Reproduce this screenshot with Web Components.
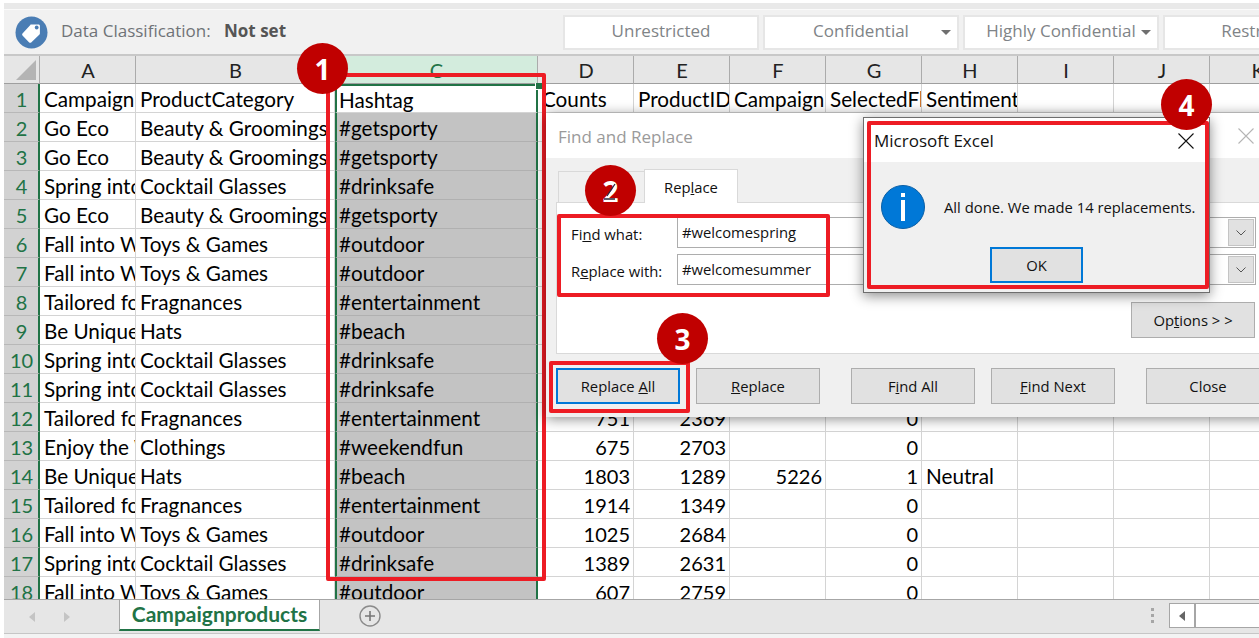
<!DOCTYPE html>
<html lang="en">
<head>
<meta charset="utf-8">
<title>Find and Replace</title>
<style>
  html, body { margin: 0; padding: 0; background: #fff; }
  body { font-family: "Open Sans", "Liberation Sans", sans-serif; }
</style>
</head>
<body>
<excel-app>
  <info-bar slot="top"></info-bar>
  <sheet-grid slot="sheet"></sheet-grid>
  <sheet-tabs slot="bottom"></sheet-tabs>

  <red-box slot="over" style="left:326px;top:73px;width:220px;height:508px"></red-box>
  <find-dialog slot="over" style="left:546px;top:113px"></find-dialog>
  <red-box slot="over" style="left:557px;top:214px;width:273px;height:83px"></red-box>
  <red-box slot="over" style="left:549px;top:361px;width:141px;height:52px"></red-box>
  <message-box slot="over" style="left:863px;top:117px"></message-box>
  <red-box slot="over" style="left:867px;top:121px;width:342px;height:168px"></red-box>
  <call-out slot="over" style="left:297px;top:43px">1</call-out>
  <call-out slot="over" style="left:585px;top:165px" show-through>2</call-out>
  <call-out slot="over" style="left:657px;top:313px">3</call-out>
  <call-out slot="over" style="left:1161px;top:79px">4</call-out>
</excel-app>

<script>
/**
 * Page shell: top strip, classification bar, sheet and tab bar stacked in a column.
 * Overlays (dialogs, call-outs, red boxes) go in the "over" slot.
 */
class ExcelApp extends HTMLElement {
  constructor() {
    super();
    this.attachShadow({ mode: 'open' });
  }

  connectedCallback() {
    this.shadowRoot.innerHTML = `
      <style>
        :host {
          display: block;
          position: relative;
          width: 1259px;
          height: 638px;
          overflow: hidden;
          background: #fff;
        }
        .col {
          display: flex;
          flex-direction: column;
          height: 100%;
          padding: 3px 0 0 4px;
          box-sizing: border-box;
        }
        .strip {
          height: 6px;
          flex: none;
          background: #e9e9e9;
          border-bottom: 1px solid #fafafa;
        }
        .sheet {
          flex: 1;
          min-height: 0;
          overflow: hidden;
        }
      </style>
      <div class="col">
        <div class="strip"></div>
        <slot name="top"></slot>
        <div class="sheet"><slot name="sheet"></slot></div>
        <slot name="bottom"></slot>
      </div>
      <slot name="over"></slot>
    `;
  }
}

class ClassButton extends HTMLElement {
  constructor() {
    super();
    this.attachShadow({ mode: 'open' });
  }

  connectedCallback() {
    const arrow = this.hasAttribute('arrow');
    this.shadowRoot.innerHTML = `
      <style>
        :host {
          display: block;
          flex: none;
          width: 196px;
          height: 35px;
        }
        .btn {
          display: flex;
          align-items: center;
          justify-content: center;
          position: relative;
          height: 100%;
          box-sizing: border-box;
          padding-bottom: 3px;
          background: #fff;
          border: 2px solid #e6e6e6;
          color: #7f8487;
          font: 17px "Open Sans", sans-serif;
          white-space: nowrap;
        }
        .caret {
          position: absolute;
          right: 6px;
          top: 13px;
          width: 0;
          height: 0;
          border-left: 5px solid transparent;
          border-right: 5px solid transparent;
          border-top: 5px solid #6f6f6f;
        }
      </style>
      <div class="btn"><slot></slot>${arrow ? '<span class="caret"></span>' : ''}</div>
    `;
  }
}

class InfoBar extends HTMLElement {
  constructor() {
    super();
    this.attachShadow({ mode: 'open' });
  }

  connectedCallback() {
    this.shadowRoot.innerHTML = `
      <style>
        :host {
          display: flex;
          align-items: center;
          flex: none;
          height: 44px;
          background: #f1f1f1;
          border-bottom: 2px solid #c8c8c8;
          font: 17px "Open Sans", sans-serif;
          color: #6f7377;
          white-space: nowrap;
        }
        .tag { flex: none; width: 33px; height: 33px; margin: 0 13px 0 11px; }
        .label { width: 163px; flex: none; margin-top: -3px; }
        b { width: 339px; flex: none; margin-top: -3px; color: #555; font-weight: 700; }
        .btns { display: flex; gap: 4px; }
      </style>
      <svg class="tag" viewBox="0 0 33 33">
        <circle cx="16.5" cy="16.5" r="16" fill="#4a7db4"/>
        <path d="M15 8.500h8.500c.8 0 1.400.6 1.400 1.400V17.500c0 .4-.2.7-.4.9l-8.300 8c-.6.5-1.400.5-2 0l-6.700-6.800c-.5-.6-.5-1.400 0-2l7.400-8.200c.3-.3.6-.4 1-.4z" fill="#fff"/>
        <circle cx="21.700" cy="11.500" r="1.900" fill="#4a7db4"/>
      </svg>
      <span class="label">Data Classification:</span>
      <b>Not set</b>
      <div class="btns">
        <class-button>Unrestricted</class-button>
        <class-button arrow>Confidential</class-button>
        <class-button arrow>Highly Confidential</class-button>
        <class-button>Restricted</class-button>
      </div>
    `;
  }
}

const COLUMNS = ['A', 'B', 'C', 'D', 'E', 'F', 'G', 'H', 'I', 'J', 'K'];

// [Campaign, ProductCategory, Hashtag, D, E, F, G, H]; the dialogs cover D-H on rows 2-11
const ROWS = [
  ['CampaignName', 'ProductCategory', 'Hashtag', 'Counts', 'ProductID', 'CampaignID', 'SelectedFlag', 'Sentiment'],
  ['Go Eco', 'Beauty & Groomings', '#getsporty'],
  ['Go Eco', 'Beauty & Groomings', '#getsporty'],
  ['Spring into Summer', 'Cocktail Glasses', '#drinksafe'],
  ['Go Eco', 'Beauty & Groomings', '#getsporty'],
  ['Fall into Winter', 'Toys & Games', '#outdoor'],
  ['Fall into Winter', 'Toys & Games', '#outdoor'],
  ['Tailored for You', 'Fragnances', '#entertainment'],
  ['Be Unique', 'Hats', '#beach'],
  ['Spring into Summer', 'Cocktail Glasses', '#drinksafe'],
  ['Spring into Summer', 'Cocktail Glasses', '#drinksafe'],
  ['Tailored for You', 'Fragnances', '#entertainment', 751, 2369, '', 0],
  ['Enjoy the Weekend', 'Clothings', '#weekendfun', 675, 2703, '', 0],
  ['Be Unique', 'Hats', '#beach', 1803, 1289, 5226, 1, 'Neutral'],
  ['Tailored for You', 'Fragnances', '#entertainment', 1914, 1349, '', 0],
  ['Fall into Winter', 'Toys & Games', '#outdoor', 1025, 2684, '', 0],
  ['Spring into Summer', 'Cocktail Glasses', '#drinksafe', 1389, 2631, '', 0],
  ['Fall into Winter', 'Toys & Games', '#outdoor', 607, 2759, '', 0]
];

class SheetGrid extends HTMLElement {
  constructor() {
    super();
    this.attachShadow({ mode: 'open' });
  }

  connectedCallback() {
    const head = COLUMNS.map(c => `<div class="ch${c === 'C' ? ' on' : ''}">${c}</div>`).join('');
    const body = ROWS.map((row, r) => {
      const cells = COLUMNS.map((c, i) => {
        const v = row[i] === undefined ? '' : row[i];
        const num = typeof v === 'number' ? ' num' : '';
        let sel = '';
        if (c === 'C') sel = r === 0 ? ' first' : ' sel';
        const esc = String(v).replace(/&/g, '&amp;');
        return `<div class="c${num}${sel}">${esc}</div>`;
      }).join('');
      return `<div class="rh">${r + 1}</div>${cells}`;
    }).join('');

    this.shadowRoot.innerHTML = `
      <style>
        :host {
          display: block;
          font: 20.700px Lato, "Open Sans", sans-serif;
          color: #000;
        }
        .grid {
          display: grid;
          position: relative;
          grid-template-columns: 36px 96px 199px 203px repeat(8, 96px);
          grid-auto-rows: 29px;
          grid-template-rows: 28px;
        }
        .corner, .ch {
          background: #e6e6e6;
          border-right: 1px solid #ababab;
          border-bottom: 1px solid #9f9f9f;
          box-sizing: border-box;
        }
        .corner { position: relative; }
        .corner::after {
          content: "";
          position: absolute;
          right: 3px;
          bottom: 3px;
          border-left: 20px solid transparent;
          border-bottom: 20px solid #b4b4b4;
        }
        .ch {
          display: flex;
          align-items: center;
          justify-content: center;
          padding: 1px 0 0 1px;
          font-size: 20px;
          color: #222;
        }
        .ch.on { background: #d3ecdd; color: #217346; }
        .rh {
          display: flex;
          align-items: center;
          justify-content: center;
          padding: 1px 0 0 1px;
          background: #d2d2d2;
          border-right: 2px solid #217346;
          border-bottom: 1px solid #b8b8b8;
          box-sizing: border-box;
          font-size: 20px;
          color: #217346;
        }
        .c {
          border-right: 1px solid #d4d4d4;
          border-bottom: 1px solid #d4d4d4;
          box-sizing: border-box;
          padding: 1px 3px 0 4px;
          line-height: 28px;
          overflow: hidden;
          white-space: nowrap;
        }
        .num { text-align: right; font-size: 20px; }
        .sel, .first {
          border-left: 2px solid #217346;
          border-right: 2px solid #217346;
          padding-left: 2px;
        }
        .sel { background: #c3c3c3; border-bottom-color: #b0b0b0; background-clip: padding-box; }
        .first { background: #fff; border-top: 2px solid #217346; line-height: 26px; }
        .handle {
          position: absolute;
          left: 531px;
          top: 27px;
          width: 6px;
          height: 6px;
          background: #217346;
          border: 1px solid #fff;
          border-width: 0 0 1px 1px;
        }
      </style>
      <div class="grid">
        <div class="corner"></div>${head}
        ${body}
        <div class="handle"></div>
      </div>
    `;
  }
}

class SheetTabs extends HTMLElement {
  constructor() {
    super();
    this.attachShadow({ mode: 'open' });
  }

  connectedCallback() {
    this.shadowRoot.innerHTML = `
      <style>
        :host {
          display: block;
          flex: none;
          height: 39px;
          background: #f3f3f3;
        }
        .bar {
          display: flex;
          height: 35px;
          box-sizing: border-box;
          background: #e6e6e6;
          border-top: 1px solid #a6a6a6;
          border-bottom: 1px solid #c6c6c6;
        }
        .nav { display: flex; align-items: center; gap: 29px; width: 115px; padding-left: 25px; box-sizing: border-box; flex: none; }
        .nav i { width: 0; height: 0; border-top: 5px solid transparent; border-bottom: 5px solid transparent; }
        .nav .l { border-right: 6px solid #c4c4c4; }
        .nav .r { border-left: 6px solid #c4c4c4; }
        .tab {
          flex: none;
          width: 201px;
          height: 31px;
          box-sizing: border-box;
          background: #fff;
          border: 1px solid #a6a6a6;
          border-top: 0;
          border-bottom: 2px solid #217346;
          color: #217346;
          font: 700 21px Lato, sans-serif;
          text-align: center;
          line-height: 28px;
        }
        .add { flex: none; margin: 5px 0 0 39px; width: 22px; height: 22px; }
        .space { flex: 1; }
        .dots { flex: none; display: flex; flex-direction: column; gap: 3px; margin: 8px 15px 0 0; }
        .dots i { width: 3px; height: 3px; background: #a6a6a6; }
        .scroll {
          flex: none;
          display: flex;
          width: 100px;
          height: 25px;
          margin: 3px -10px 0 0;
          box-sizing: border-box;
          border: 1px solid #a6a6a6;
          background: #fff;
        }
        .scroll .btn {
          display: flex;
          align-items: center;
          justify-content: center;
          width: 24px;
          border-right: 2px solid #a6a6a6;
        }
        .scroll .btn i { border-top: 5px solid transparent; border-bottom: 5px solid transparent; border-right: 6px solid #666; }
      </style>
      <div class="bar">
        <div class="nav"><i class="l"></i><i class="r"></i></div>
        <div class="tab">Campaignproducts</div>
        <svg class="add" viewBox="0 0 22 22">
          <circle cx="11" cy="11" r="10" fill="none" stroke="#8a8a8a" stroke-width="1.400"/>
          <path d="M11 6v10M6 11h10" stroke="#777" stroke-width="1.600"/>
        </svg>
        <div class="space"></div>
        <div class="dots"><i></i><i></i><i></i></div>
        <div class="scroll"><div class="btn"><i></i></div></div>
      </div>
    `;
  }
}

class DlgButton extends HTMLElement {
  constructor() {
    super();
    this.attachShadow({ mode: 'open' });
  }

  connectedCallback() {
    this.shadowRoot.innerHTML = `
      <style>
        :host {
          display: flex;
          align-items: center;
          justify-content: center;
          flex: none;
          width: 124px;
          height: 36px;
          box-sizing: border-box;
          background: #e1e1e1;
          border: 1px solid #adadad;
          color: #111;
          font: 14.800px "Open Sans", sans-serif;
          white-space: nowrap;
        }
        :host([primary]) { border: 2px solid #0078d7; }
      </style>
      <span><slot></slot></span>
    `;
  }
}

class FindDialog extends HTMLElement {
  constructor() {
    super();
    this.attachShadow({ mode: 'open' });
  }

  connectedCallback() {
    this.shadowRoot.innerHTML = `
      <style>
        :host {
          display: block;
          position: absolute;
          width: 734px;
          height: 304px;
          background: #f0f0f0;
          box-shadow: 0 2px 12px rgba(0, 0, 0, .45);
          font: 14.800px "Open Sans", sans-serif;
          color: #111;
        }
        .title {
          display: flex;
          align-items: center;
          justify-content: space-between;
          height: 45px;
          box-sizing: border-box;
          padding: 1px 26px 0 12px;
          background: #fff;
          color: #9a9a9a;
          font-size: 17px;
        }
        .body { padding: 11px 10px 0; }
        .tabs { display: flex; height: 34px; padding-left: 2px; }
        .tab {
          display: flex;
          align-items: center;
          justify-content: center;
          padding-top: 1px;
          box-sizing: border-box;
          border: 1px solid #d9d9d9;
          border-bottom: 0;
        }
        .tab.find { width: 86px; margin-top: 2px; border-right: 0; }
        .tab.cur { width: 94px; background: #fff; }
        .panel {
          display: flex;
          flex-direction: column;
          height: 152px;
          box-sizing: border-box;
          padding: 14px 14px 0 14px;
          background: #fff;
          border: 1px solid #d9d9d9;
          margin-top: -1px;
        }
        .row { display: flex; align-items: center; height: 31px; }
        .row + .row { margin-top: 6px; }
        .row label { width: 106px; flex: none; padding-top: 3px; }
        .input {
          display: flex;
          align-items: center;
          justify-content: space-between;
          flex: none;
          width: 579px;
          height: 31px;
          box-sizing: border-box;
          padding: 0 1px 0 4px;
          border: 1px solid #adadad;
          background: #fff;
          line-height: 24px;
        }
        .input span { margin-top: -2px; }
        .drop {
          display: flex;
          align-items: center;
          justify-content: center;
          width: 26px;
          height: 27px;
          background: #e1e1e1;
          border: 1px solid #c4c4c4;
          box-sizing: border-box;
        }
        .opts { display: flex; justify-content: flex-end; margin: 17px 0 0; }
        .foot { display: flex; margin-top: 14px; }
        .foot dlg-button + dlg-button { margin-left: 16px; }
        .foot .gap { margin-left: 31px !important; }
      </style>
      <div class="title">
        <span>Find and Replace</span>
        <svg width="16" height="16" viewBox="0 0 16 16"><path d="M0.500 0.500l15 15M15.500 0.500l-15 15" stroke="#b5b5b5" stroke-width="1.100"/></svg>
      </div>
      <div class="body">
        <div class="tabs">
          <div class="tab find"><span>Fin<u>d</u></span></div>
          <div class="tab cur"><span>Rep<u>l</u>ace</span></div>
        </div>
        <div class="panel">
          <div class="row">
            <label>Fi<u>n</u>d what:</label>
            <div class="input"><span>#welcomespring</span>${this.chevron()}</div>
          </div>
          <div class="row">
            <label>R<u>e</u>place with:</label>
            <div class="input"><span>#welcomesummer</span>${this.chevron()}</div>
          </div>
          <div class="opts"><dlg-button>Op<u>t</u>ions &gt; &gt;</dlg-button></div>
        </div>
        <div class="foot">
          <dlg-button primary>Replace <u>A</u>ll</dlg-button>
          <dlg-button><u>R</u>eplace</dlg-button>
          <dlg-button class="gap">F<u>i</u>nd All</dlg-button>
          <dlg-button><u>F</u>ind Next</dlg-button>
          <dlg-button class="gap">Close</dlg-button>
        </div>
      </div>
    `;
  }

  chevron() {
    return `<div class="drop"><svg width="10" height="6" viewBox="0 0 10 6"><path d="M0.500 0.500L5 5l4.500-4.500" fill="none" stroke="#555" stroke-width="1"/></svg></div>`;
  }
}

class MessageBox extends HTMLElement {
  constructor() {
    super();
    this.attachShadow({ mode: 'open' });
  }

  connectedCallback() {
    this.shadowRoot.innerHTML = `
      <style>
        :host {
          display: flex;
          flex-direction: column;
          position: absolute;
          width: 347px;
          height: 176px;
          box-sizing: border-box;
          background: #f0f0f0;
          border: 1px solid #6e6e6e;
          box-shadow: 0 3px 12px rgba(0, 0, 0, .45);
          font: 14.800px "Open Sans", sans-serif;
          color: #111;
        }
        .title {
          display: flex;
          align-items: center;
          justify-content: space-between;
          flex: none;
          height: 44px;
          padding: 1px 15px 0 10px;
          box-sizing: border-box;
          background: #fff;
          font-size: 17px;
        }
        .msg {
          display: flex;
          align-items: center;
          flex: none;
          margin-top: 23px;
          padding-left: 17px;
          gap: 19px;
          white-space: nowrap;
        }
        .msg svg { flex: none; }
        .foot { display: flex; justify-content: center; margin-top: 18px; }
        dlg-button { width: 93px; }
      </style>
      <div class="title">
        <span>Microsoft Excel</span>
        <svg width="16" height="16" viewBox="0 0 16 16"><path d="M0.500 0.500l15 15M15.500 0.500l-15 15" stroke="#111" stroke-width="1.100"/></svg>
      </div>
      <div class="msg">
        <svg width="44" height="44" viewBox="0 0 44 44">
          <circle cx="22" cy="22" r="21.500" fill="#0078d7" stroke="#0a5fa6"/>
          <rect x="20" y="8" width="4" height="4" fill="#fff"/>
          <rect x="20" y="15" width="4" height="21" fill="#fff"/>
        </svg>
        <span>All done. We made 14 replacements.</span>
      </div>
      <div class="foot"><dlg-button primary>OK</dlg-button></div>
    `;
  }
}

class RedBox extends HTMLElement {
  constructor() {
    super();
    this.attachShadow({ mode: 'open' });
  }

  connectedCallback() {
    this.shadowRoot.innerHTML = `
      <style>
        :host {
          display: block;
          position: absolute;
          box-sizing: border-box;
          border: 4px solid #ed1c24;
          border-radius: 2px;
          pointer-events: none;
        }
      </style>
    `;
  }
}

class CallOut extends HTMLElement {
  constructor() {
    super();
    this.attachShadow({ mode: 'open' });
  }

  connectedCallback() {
    // show-through: the tab label under the badge shows as dark marks on the digit
    const marks = this.hasAttribute('show-through')
      ? '<svg class="marks" width="51" height="51" viewBox="0 0 51 51"><path d="M30 19l-8 12M19 34h11" fill="none" stroke="#2a2a3a" stroke-width="1.300"/></svg>'
      : '';
    this.shadowRoot.innerHTML = `
      <style>
        :host {
          display: flex;
          align-items: center;
          justify-content: center;
          position: absolute;
          width: 51px;
          height: 51px;
          border-radius: 50%;
          background: #c00000;
          color: #fff;
          font: 700 28px "Open Sans", sans-serif;
        }
        .marks { position: absolute; left: 0; top: 0; }
      </style>
      <slot></slot>${marks}
    `;
  }
}

customElements.define('excel-app', ExcelApp);
customElements.define('class-button', ClassButton);
customElements.define('info-bar', InfoBar);
customElements.define('sheet-grid', SheetGrid);
customElements.define('sheet-tabs', SheetTabs);
customElements.define('dlg-button', DlgButton);
customElements.define('find-dialog', FindDialog);
customElements.define('message-box', MessageBox);
customElements.define('red-box', RedBox);
customElements.define('call-out', CallOut);
</script>
</body>
</html>
